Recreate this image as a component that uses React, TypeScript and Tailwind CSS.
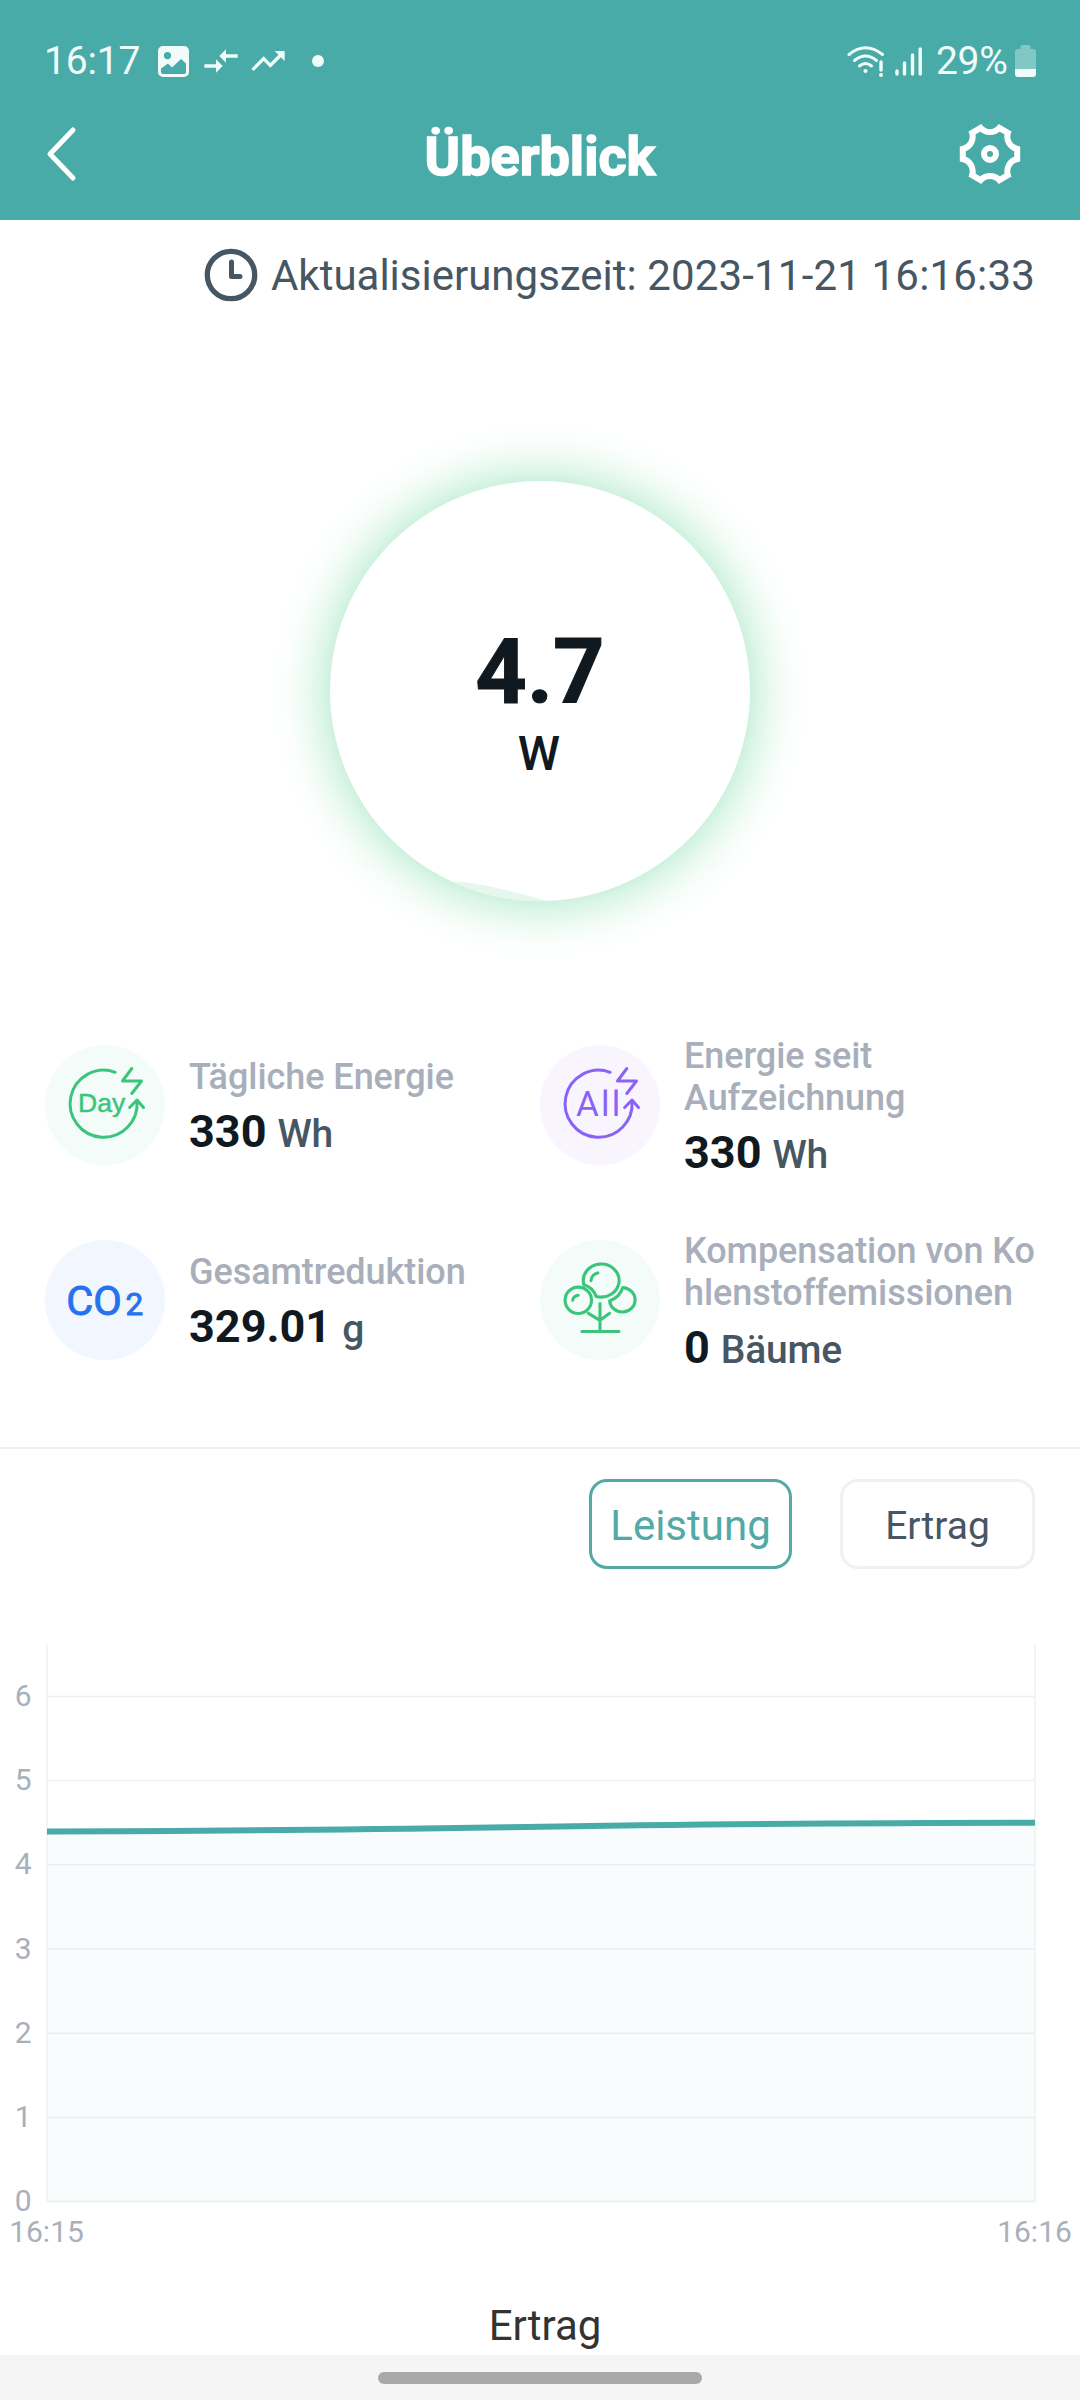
import React from "react";

const TEAL = "#49aba8";

function StatusBar() {
  return (
    <div className="flex h-[122px] items-center pr-[44px] pl-[44px] text-[#f0fbfa]">
      <span className="w-[114px] text-[39px] leading-none tracking-[-0.2px]">16:17</span>
      <svg className="h-[31px] w-[31px]" viewBox="0 0 31 31" fill="currentColor">
        <path
          fillRule="evenodd"
          d="M5 0h21a5 5 0 0 1 5 5v21a5 5 0 0 1-5 5H5a5 5 0 0 1-5-5V5a5 5 0 0 1 5-5ZM9.500 6a3.600 3.600 0 1 0 0 7.200a3.600 3.600 0 0 0 0-7.200ZM3 22.500V26a2 2 0 0 0 2 2h21a2 2 0 0 0 2-2V17.500l-5-4.500l-9 8.500l-4-4Z"
        />
      </svg>
      <svg className="ml-[11.500px] h-[40px] w-[40px]" viewBox="0 0 24 24" fill="currentColor">
        <path d="M9.010 14H2v2h7.010v3L13 15l-3.990-4v3zm5.980-1v-3H22V8h-7.010V5L11 9l3.990 4z" />
      </svg>
      <svg className="ml-[7.500px] h-[40px] w-[40px]" viewBox="0 0 24 24" fill="currentColor">
        <path d="M16 6l2.290 2.290-4.880 4.880-4-4L2 16.590 3.410 18l6-6 4 4 6.300-6.290L22 12V6z" />
      </svg>
      <span className="ml-[24px] h-[12px] w-[12px] rounded-full bg-current" />
      <div className="flex-1" />
      <svg className="h-[34px] w-[38px]" viewBox="0 0 38 34" fill="none" stroke="currentColor" strokeLinecap="round">
        <path d="M2 10.500Q18.500-3 35.500 10.500" strokeWidth="3" />
        <path d="M7.500 16.500Q18.500 7.500 29.500 16.500" strokeWidth="3" />
        <path d="M12.500 22Q18.500 17 24.500 22" strokeWidth="3" />
        <circle cx="18.500" cy="27" r="2.100" fill="currentColor" stroke="none" />
        <path d="M34 18v8" strokeWidth="3.400" />
        <circle cx="34" cy="31" r="2" fill="currentColor" stroke="none" />
      </svg>
      <svg className="ml-[10px] h-[31px] w-[28px]" viewBox="0 0 28 31" stroke="currentColor" strokeWidth="3.400" strokeLinecap="round">
        <path d="M2 25v3M9.500 17v11M17.500 9v19M25.200 3v25" />
      </svg>
      <span className="ml-[13px] w-[79px] text-[39px] leading-none tracking-[-0.300px]">29%</span>
      <svg className="h-[33px] w-[21px]" viewBox="0 0 21 33" fill="currentColor">
        <path
          opacity="0.350"
          d="M7 0h7a1.500 1.500 0 0 1 1.500 1.500V4H18a3 3 0 0 1 3 3v17H0V7a3 3 0 0 1 3-3h2.500V1.500A1.500 1.500 0 0 1 7 0Z"
        />
        <path d="M0 24h21v5a3 3 0 0 1-3 3H3a3 3 0 0 1-3-3Z" />
      </svg>
    </div>
  );
}

function Gear() {
  return (
    <svg className="h-[64px] w-[64px]" viewBox="-32 -32 64 64" fill="none" stroke="currentColor" strokeWidth="6">
      <path d="M27.200 -5V5A12.600 12.600 0 0 0 17.900 21.100L9.300 26.100A12.600 12.600 0 0 0 -9.300 26.100L-17.900 21.100A12.600 12.600 0 0 0 -27.200 5V-5A12.600 12.600 0 0 0 -17.900 -21.100L-9.300 -26.100A12.600 12.600 0 0 0 9.300 -26.100L17.900 -21.100A12.600 12.600 0 0 0 27.200 -5Z" />
      <circle r="6" />
    </svg>
  );
}

function Header() {
  return (
    <header className="h-[220px] bg-[#49aba8] text-white">
      <StatusBar />
      <div className="grid h-[64px] grid-cols-[1fr_auto_1fr] items-center px-[45px]">
        <svg className="h-[56px] w-[32px]" viewBox="0 0 32 56" fill="none" stroke="currentColor" strokeWidth="5" strokeLinecap="round" strokeLinejoin="round">
          <path d="M28 4L5 28L28 52" />
        </svg>
        <h1 className="pt-[5px] text-[54px] leading-none font-bold [-webkit-text-stroke:1.500px_white]">Überblick</h1>
        <div className="flex justify-end pr-[13px]">
          <Gear />
        </div>
      </div>
    </header>
  );
}

function Swirl() {
  return (
    <>
      <path d="M70.200 27.300A33.500 33.500 0 1 0 92 56" />
      <path d="M84.600 62.500L92 55L98.500 62.500" />
      <path d="M86.800 23.500L77.500 36H96.500L86.800 48.500" />
    </>
  );
}

function DayIcon() {
  return (
    <svg viewBox="0 0 120 120" className="h-[120px] w-[120px] shrink-0 rounded-full bg-[#f3fcf8]" fill="none" stroke="#3bc57c" strokeWidth="3" strokeLinecap="round" strokeLinejoin="round">
      <Swirl />
      <text x="33" y="67" fontSize="26.500" stroke="#3bc57c" strokeWidth="0.500" fill="#3bc57c" className="font-['Liberation_Sans',sans-serif]">
        Day
      </text>
    </svg>
  );
}

function AllIcon() {
  return (
    <svg viewBox="0 0 120 120" className="h-[120px] w-[120px] shrink-0 rounded-full bg-[#f8f5ff]" fill="none" stroke="#8a63f6" strokeWidth="3" strokeLinecap="round" strokeLinejoin="round">
      <Swirl />
      <text x="36" y="71" fontSize="35" letterSpacing="2.200" stroke="none" fill="#8a63f6">
        All
      </text>
    </svg>
  );
}

function Co2Icon() {
  return (
    <svg viewBox="0 0 120 120" className="h-[120px] w-[120px] shrink-0 rounded-full bg-[#f1f6ff]" fill="#2672ee" stroke="#2672ee" strokeWidth="0.900">
      <text x="21.300" y="75" fontSize="41.500" letterSpacing="0">
        CO
      </text>
      <text x="80.500" y="75" fontSize="31.500">
        2
      </text>
    </svg>
  );
}

function TreeIcon() {
  return (
    <svg viewBox="0 0 120 120" className="h-[120px] w-[120px] shrink-0 rounded-full bg-[#f3fcf8]" fill="none" stroke="#3bc57c" strokeWidth="3.100" strokeLinecap="round" strokeLinejoin="round">
      <path d="M43.900 44.800A17.900 16.500 0 1 1 56.200 56.400A19 19 0 0 0 43.900 44.800Z" />
      <path d="M51 40.700A8.500 8.500 0 0 1 57.900 32.900" />
      <circle cx="38.300" cy="60.300" r="13.200" />
      <path d="M32.700 60.300Q33.500 56 38.200 55.300" />
      <path d="M82.800 47.600A12.800 12.200 0 1 1 69.600 61A21 21 0 0 0 82.800 47.600Z" />
      <path d="M60 63.500V91.300M41.900 91.500H79M48.400 73.300L60 80.300L69.600 73.300" />
    </svg>
  );
}

type StatProps = { icon: React.ReactNode; lines: string[]; value: string; unit: string };

function Stat({ icon, lines, value, unit }: StatProps) {
  return (
    <div className="flex h-[120px] w-[495px] items-center gap-[24px]">
      {icon}
      <div className="pt-[14px]">
        <div className="text-[36px] leading-[42px] font-medium tracking-[-0.050px] whitespace-nowrap text-[#a8afbb]">
          {lines.map((l) => (
            <div key={l}>{l}</div>
          ))}
        </div>
        <div className="mt-[7px] leading-[53px] whitespace-nowrap">
          <span className="text-[45px] font-bold text-[#101920]">{value}</span>
          <span className="ml-[11px] text-[39px] font-medium tracking-[-0.200px] text-[#475663]">{unit}</span>
        </div>
      </div>
    </div>
  );
}

function Chart() {
  const top = 1644;
  const ticks = [6, 5, 4, 3, 2, 1, 0];
  const yOf = (v: number) => 2201.600 - v * 84.200 - top;
  return (
    <svg className="mt-[75px] block h-[610px] w-[1080px]" viewBox="0 0 1080 610">
      <path d="M47 187.400C380 187.400 520 178.700 1035 178.700V557.600H47Z" fill="#f8fcfd" />
      {ticks.map((t) => (
        <g key={t}>
          <path d={`M47 ${yOf(t)}H1035`} stroke="#7d8894" strokeOpacity="0.130" strokeWidth="1.500" />
          <text x="31.500" y={yOf(t) + 9.500} textAnchor="end" fontSize="30" fill="#a8b0bc">
            {t}
          </text>
        </g>
      ))}
      <path d="M47 0V558.500M1035 0V558.500" stroke="#f1f3f5" strokeWidth="1.800" />
      <path d="M47 187.400C430 187.400 600 178.700 1035 178.700" stroke={TEAL} strokeWidth="6" fill="none" />
      <text x="46.500" y="597.500" textAnchor="middle" fontSize="30" fill="#a8b0bc">
        16:15
      </text>
      <text x="1034.500" y="597.500" textAnchor="middle" fontSize="30" fill="#a8b0bc">
        16:16
      </text>
    </svg>
  );
}

export default function App() {
  return (
    <div className="flex h-[2400px] w-[1080px] flex-col overflow-hidden bg-white font-['Roboto',sans-serif]">
      <Header />
      <div className="mt-[27px] flex h-[56px] items-center justify-end pr-[45px] text-[#475663]">
        <svg className="mr-[13px] h-[54px] w-[54px]" viewBox="0 0 54 54" fill="none" stroke="currentColor">
          <circle cx="27" cy="27" r="23.700" strokeWidth="5.300" />
          <path d="M27.500 14V28.500H36" strokeWidth="5" strokeLinecap="round" strokeLinejoin="round" />
        </svg>
        <span className="pt-[2px] text-[42px] leading-none">
          Aktualisierungszeit: <span className="tracking-[0.180px]">2023-11-21 16:16:33</span>
        </span>
      </div>

      <div className="mt-[178px] flex justify-center">
        <div className="relative flex h-[420px] w-[420px] flex-col items-center rounded-full bg-white pt-[139px] text-[#101920] shadow-[0_0_56px_#98e3ba]">
          <svg className="absolute inset-0 h-full w-full" viewBox="0 0 420 420">
            <path d="M121.500 400.500C150 400.500 190 413 218 420A210 210 0 0 1 121.500 400.500Z" fill="#e6f8ee" />
          </svg>
          <div className="relative text-[90px] leading-[106px] font-bold [-webkit-text-stroke:1px_#101920]">4.7</div>
          <div className="relative pr-[2px] text-[48px] leading-[56px] font-medium">W</div>
        </div>
      </div>

      <div className="mt-[144px] grid grid-cols-[495px_495px] gap-y-[75px] pl-[45px]">
        <Stat icon={<DayIcon />} lines={["Tägliche Energie"]} value="330" unit="Wh" />
        <Stat icon={<AllIcon />} lines={["Energie seit", "Aufzeichnung"]} value="330" unit="Wh" />
        <Stat icon={<Co2Icon />} lines={["Gesamtreduktion"]} value="329.01" unit="g" />
        <Stat icon={<TreeIcon />} lines={["Kompensation von Ko", "hlenstoffemissionen"]} value="0" unit="Bäume" />
      </div>

      <div className="mt-[87px] h-[2px] shrink-0 bg-[#eeeff0]" />

      <div className="mt-[30px] flex justify-end gap-[48px] pr-[45px]">
        <button className="h-[90px] w-[203px] rounded-[18px] border-[3px] border-[#52a9a5] pt-[4px] text-[42px] leading-none text-[#52a9a5]">
          Leistung
        </button>
        <button className="h-[90px] w-[195px] rounded-[18px] border-[3px] border-[#eff0f2] pt-[4px] text-[39px] leading-none text-[#475663]">
          Ertrag
        </button>
      </div>

      <Chart />

      <h2 className="mt-[47px] pl-[10px] text-center text-[42px] leading-[50px] text-[#333333]">Ertrag</h2>
      <div className="mt-auto flex h-[45px] shrink-0 justify-center bg-[#f5f5f5] pt-[17px]">
        <div className="h-[12px] w-[324px] rounded-full bg-[#a9a9a9]" />
      </div>
    </div>
  );
}
